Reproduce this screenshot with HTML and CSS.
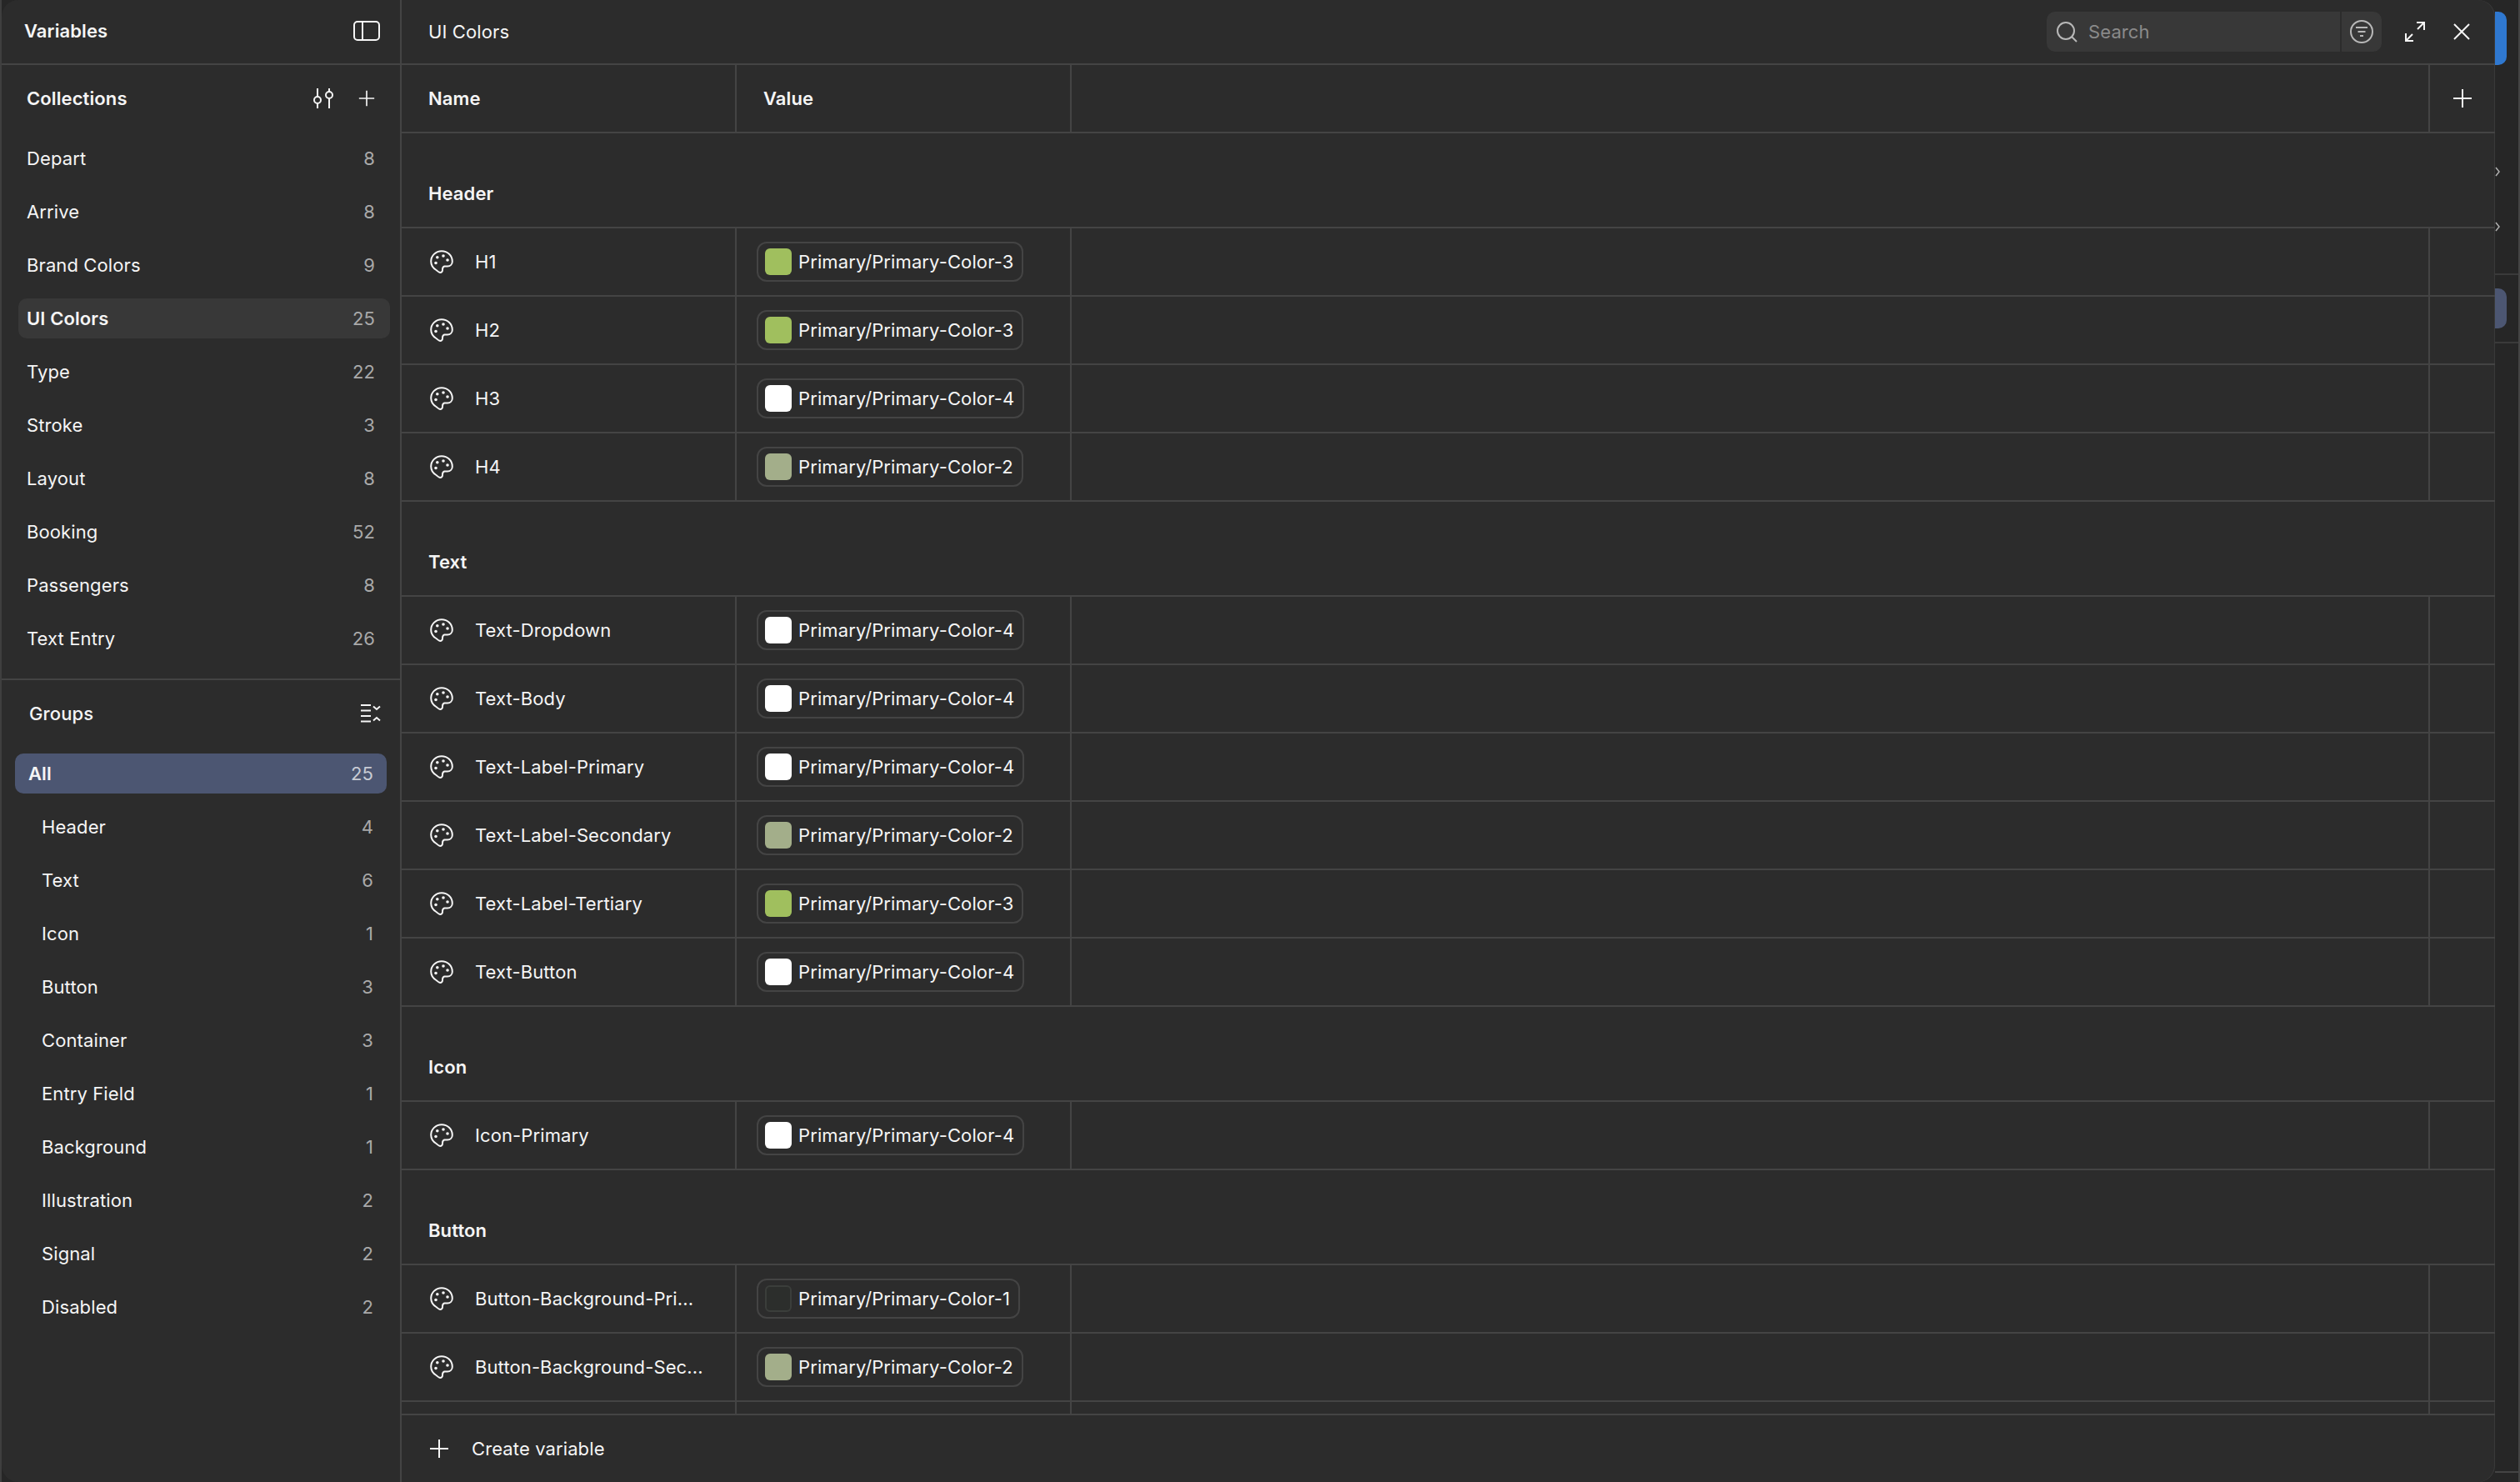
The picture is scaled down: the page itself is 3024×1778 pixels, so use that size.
FILE: index.html
```html
<!DOCTYPE html>
<html lang="en">
<head>
<meta charset="utf-8">
<title>Variables</title>
<link rel="stylesheet" href="styles.css">
</head>
<body>
<svg class="defs" width="0" height="0" aria-hidden="true">
  <symbol id="palette" viewBox="0 0 28 28">
    <path d="M14 1.200C6.800 1.200 1.200 6.800 1.200 13.600c0 4.800 2.600 8.300 6.300 10.400 1.300.8 2.400 2.400 4 2.800 2.200.5 3.600-1 3.500-3-.1-1.600.1-3.500 2.200-4.300h3.800c3.300 0 5.800-2.400 5.800-5.800C26.800 6.600 21 1.200 14 1.200z" fill="none" stroke="currentColor" stroke-width="2" stroke-linejoin="round"/>
    <circle cx="8.800" cy="8.800" r="1.800"/><circle cx="16" cy="7" r="1.800"/><circle cx="21" cy="12" r="1.800"/><circle cx="7" cy="15.500" r="1.800"/>
  </symbol>
  <symbol id="plus" viewBox="0 0 24 24">
    <path d="M12 1v22M1 12h22" fill="none" stroke="currentColor" stroke-width="2"/>
  </symbol>
</svg>
<div class="page">
  <div class="modal">
    <aside class="sidebar">
      <header class="side-title">
        <span class="strong">Variables</span>
        <svg class="ic-panel" width="32" height="24" viewBox="0 0 32 24"><rect x="1" y="1" width="30" height="22" rx="4" fill="none" stroke="currentColor" stroke-width="2"/><path d="M11 1v22" stroke="currentColor" stroke-width="2"/></svg>
      </header>
      <section class="collections">
        <div class="sec-head">
          <span class="strong">Collections</span>
          <span class="sec-icons">
            <svg width="26" height="24" viewBox="0 0 26 24"><g fill="none" stroke="currentColor" stroke-width="2"><path d="M6 0v10M6 18v6M20 0v4M20 12v12"/><circle cx="6" cy="14" r="4"/><circle cx="20" cy="8" r="4"/></g></svg>
            <svg class="ic-plus20" width="20" height="20"><use href="#plus"/></svg>
          </span>
        </div>
        <ul class="list">
          <li class="item"><span>Depart</span><span class="count">8</span></li>
          <li class="item"><span>Arrive</span><span class="count">8</span></li>
          <li class="item"><span>Brand Colors</span><span class="count">9</span></li>
          <li class="item item-current"><span class="strong">UI Colors</span><span class="count">25</span></li>
          <li class="item"><span>Type</span><span class="count">22</span></li>
          <li class="item"><span>Stroke</span><span class="count">3</span></li>
          <li class="item"><span>Layout</span><span class="count">8</span></li>
          <li class="item"><span>Booking</span><span class="count">52</span></li>
          <li class="item"><span>Passengers</span><span class="count">8</span></li>
          <li class="item"><span>Text Entry</span><span class="count">26</span></li>
        </ul>
      </section>
      <section class="groups">
        <div class="sec-head groups-head">
          <span class="medium">Groups</span>
          <svg width="24" height="22" viewBox="0 0 24 22"><path d="M0 1h12M0 7.500h12M0 14h12M0 20.500h12M15 2.500l4 3.500 4-3.500M15 19.500l4-3.500 4 3.500" fill="none" stroke="currentColor" stroke-width="2"/></svg>
        </div>
        <ul class="list list-groups">
          <li class="item item-all"><span class="strong">All</span><span class="count">25</span></li>
          <li class="item item-child"><span>Header</span><span class="count">4</span></li>
          <li class="item item-child"><span>Text</span><span class="count">6</span></li>
          <li class="item item-child"><span>Icon</span><span class="count">1</span></li>
          <li class="item item-child"><span>Button</span><span class="count">3</span></li>
          <li class="item item-child"><span>Container</span><span class="count">3</span></li>
          <li class="item item-child"><span>Entry Field</span><span class="count">1</span></li>
          <li class="item item-child"><span>Background</span><span class="count">1</span></li>
          <li class="item item-child"><span>Illustration</span><span class="count">2</span></li>
          <li class="item item-child"><span>Signal</span><span class="count">2</span></li>
          <li class="item item-child"><span>Disabled</span><span class="count">2</span></li>
        </ul>
      </section>
    </aside>
    <main class="main">
      <header class="topbar">
        <span class="top-name">UI Colors</span>
        <div class="top-tools">
          <div class="search">
            <div class="search-field">
              <svg width="25" height="25" viewBox="0 0 25 25"><circle cx="11" cy="11" r="10" fill="none" stroke="currentColor" stroke-width="2"/><path d="M18 18l6 6" stroke="currentColor" stroke-width="2"/></svg>
              <span>Search</span>
            </div>
            <div class="search-filter">
              <svg width="28" height="28" viewBox="0 0 28 28"><circle cx="14" cy="14" r="13" fill="none" stroke="currentColor" stroke-width="2"/><path d="M7 9h14M9.500 14h9M12 19h4" stroke="currentColor" stroke-width="2"/></svg>
            </div>
          </div>
          <svg class="ic-expand" width="24" height="24" viewBox="0 0 24 24"><path d="M14 1h9v9M23 1l-8 8M10 23H1v-9M1 23l8-8" fill="none" stroke="currentColor" stroke-width="2"/></svg>
          <svg class="ic-close" width="20" height="20" viewBox="0 0 20 20"><path d="M1 1l18 18M19 1L1 19" fill="none" stroke="currentColor" stroke-width="2"/></svg>
        </div>
      </header>
      <div class="table">
        <div class="row row-head">
          <div class="cell"><span class="strong">Name</span></div>
          <div class="cell cell-value-head"><span class="strong">Value</span></div>
          <div class="cell"></div>
          <div class="cell cell-add"><svg width="24" height="24"><use href="#plus"/></svg></div>
        </div>

        <div class="group-title strong">Header</div>
        <div class="row"><div class="cell cell-name"><svg class="palette" width="28" height="28"><use href="#palette"/></svg><span>H1</span></div><div class="cell"><span class="chip"><i class="swatch sw-3"></i>Primary/Primary-Color-3</span></div><div class="cell"></div><div class="cell"></div></div>
        <div class="row"><div class="cell cell-name"><svg class="palette" width="28" height="28"><use href="#palette"/></svg><span>H2</span></div><div class="cell"><span class="chip"><i class="swatch sw-3"></i>Primary/Primary-Color-3</span></div><div class="cell"></div><div class="cell"></div></div>
        <div class="row"><div class="cell cell-name"><svg class="palette" width="28" height="28"><use href="#palette"/></svg><span>H3</span></div><div class="cell"><span class="chip"><i class="swatch sw-4"></i>Primary/Primary-Color-4</span></div><div class="cell"></div><div class="cell"></div></div>
        <div class="row"><div class="cell cell-name"><svg class="palette" width="28" height="28"><use href="#palette"/></svg><span>H4</span></div><div class="cell"><span class="chip"><i class="swatch sw-2"></i>Primary/Primary-Color-2</span></div><div class="cell"></div><div class="cell"></div></div>

        <div class="group-title strong">Text</div>
        <div class="row"><div class="cell cell-name"><svg class="palette" width="28" height="28"><use href="#palette"/></svg><span>Text-Dropdown</span></div><div class="cell"><span class="chip"><i class="swatch sw-4"></i>Primary/Primary-Color-4</span></div><div class="cell"></div><div class="cell"></div></div>
        <div class="row"><div class="cell cell-name"><svg class="palette" width="28" height="28"><use href="#palette"/></svg><span>Text-Body</span></div><div class="cell"><span class="chip"><i class="swatch sw-4"></i>Primary/Primary-Color-4</span></div><div class="cell"></div><div class="cell"></div></div>
        <div class="row"><div class="cell cell-name"><svg class="palette" width="28" height="28"><use href="#palette"/></svg><span>Text-Label-Primary</span></div><div class="cell"><span class="chip"><i class="swatch sw-4"></i>Primary/Primary-Color-4</span></div><div class="cell"></div><div class="cell"></div></div>
        <div class="row"><div class="cell cell-name"><svg class="palette" width="28" height="28"><use href="#palette"/></svg><span>Text-Label-Secondary</span></div><div class="cell"><span class="chip"><i class="swatch sw-2"></i>Primary/Primary-Color-2</span></div><div class="cell"></div><div class="cell"></div></div>
        <div class="row"><div class="cell cell-name"><svg class="palette" width="28" height="28"><use href="#palette"/></svg><span>Text-Label-Tertiary</span></div><div class="cell"><span class="chip"><i class="swatch sw-3"></i>Primary/Primary-Color-3</span></div><div class="cell"></div><div class="cell"></div></div>
        <div class="row"><div class="cell cell-name"><svg class="palette" width="28" height="28"><use href="#palette"/></svg><span>Text-Button</span></div><div class="cell"><span class="chip"><i class="swatch sw-4"></i>Primary/Primary-Color-4</span></div><div class="cell"></div><div class="cell"></div></div>

        <div class="group-title strong">Icon</div>
        <div class="row"><div class="cell cell-name"><svg class="palette" width="28" height="28"><use href="#palette"/></svg><span>Icon-Primary</span></div><div class="cell"><span class="chip"><i class="swatch sw-4"></i>Primary/Primary-Color-4</span></div><div class="cell"></div><div class="cell"></div></div>

        <div class="group-title strong">Button</div>
        <div class="row"><div class="cell cell-name"><svg class="palette" width="28" height="28"><use href="#palette"/></svg><span>Button-Background-Pri...</span></div><div class="cell"><span class="chip"><i class="swatch sw-1"></i>Primary/Primary-Color-1</span></div><div class="cell"></div><div class="cell"></div></div>
        <div class="row"><div class="cell cell-name"><svg class="palette" width="28" height="28"><use href="#palette"/></svg><span>Button-Background-Sec...</span></div><div class="cell"><span class="chip"><i class="swatch sw-2"></i>Primary/Primary-Color-2</span></div><div class="cell"></div><div class="cell"></div></div>
        <div class="row"><div class="cell"></div><div class="cell"></div><div class="cell"></div><div class="cell"></div></div>
      </div>
      <footer class="footer">
        <svg width="24" height="24"><use href="#plus"/></svg>
        <span>Create variable</span>
      </footer>
    </main>
  </div>
  <div class="behind">
    <div class="behind-tab"></div>
    <div class="behind-chevrons">
      <svg width="6" height="12" viewBox="0 0 6 12"><path d="M1 1l4 5-4 5" fill="none" stroke="currentColor" stroke-width="1.500"/></svg>
      <svg width="6" height="12" viewBox="0 0 6 12"><path d="M1 1l4 5-4 5" fill="none" stroke="currentColor" stroke-width="1.500"/></svg>
    </div>
    <div class="behind-sep"></div>
    <div class="behind-pill"></div>
    <div class="behind-sep behind-sep-low"></div>
    <div class="behind-base"></div>
  </div>
</div>
</body>
</html>
```
FILE: styles.css
```css
* { box-sizing: border-box; }
html, body { margin: 0; padding: 0; }
body {
  width: 3024px;
  height: 1778px;
  overflow: hidden;
  background: #262626;
  color: #f5f5f5;
  font-family: Inter, "Liberation Sans", sans-serif;
  font-size: 22px;
  line-height: 32px;
  letter-spacing: 0.11px;
}
.defs { position: absolute; }
svg { display: block; flex: none; fill: currentColor; }
ul { list-style: none; margin: 0; padding: 0; }
.strong { font-weight: 600; }
.medium { font-weight: 500; }

.page { display: flex; width: 3024px; height: 1778px; border-left: 2px solid #3f3f3f; }
.modal {
  display: flex;
  width: 2992px;
  height: 1778px;
  background: #2c2c2c;
  border-radius: 20px;
  overflow: hidden;
  box-shadow: inset -1px 0 0 #3a3a3a;
}

/* sidebar */
.sidebar { display: flex; flex-direction: column; width: 480px; flex: none; border-right: 2px solid #444; }
.side-title { display: flex; align-items: center; justify-content: space-between; height: 78px; padding: 0 24px 2px 27px; border-bottom: 2px solid #444; }
.ic-panel { color: #f5f5f5; }
.collections { height: 738px; border-bottom: 2px solid #444; }
.sec-head { display: flex; align-items: center; justify-content: space-between; height: 80px; padding: 0 30px 0 30px; }
.sec-icons { display: flex; align-items: center; gap: 29px; }
.list { padding: 0 10px 0 20px; }
.item { display: flex; align-items: center; justify-content: space-between; height: 64px; padding: 0 20px 0 10px; }
.count { color: #a9a9a9; }
.item-current { position: relative; }
.item-current::before { content: ""; position: absolute; left: 0; right: 2px; top: 8px; bottom: 8px; background: #383838; border-radius: 10px; }
.item-current > span { position: relative; }

.groups-head { padding: 0 23px 0 33px; height: 80px; }
.list-groups { padding: 0 14px 0 16px; }
.list-groups .item { padding: 0 18px 0 16px; }
.item-all { position: relative; }
.item-all::before { content: ""; position: absolute; left: 0; right: 2px; top: 8px; bottom: 8px; background: #4c5672; border-radius: 10px; }
.item-all > span { position: relative; }
.item-all .count { color: #c8cbd4; }
.list-groups .item-child { padding-left: 32px; }

/* main */
.main { display: flex; flex-direction: column; flex: 1; min-width: 0; }
.topbar { display: flex; align-items: center; justify-content: space-between; height: 78px; padding: 0 30px 1px 32px; border-bottom: 2px solid #444; flex: none; }
.top-tools { display: flex; align-items: center; }
.search { display: flex; width: 402px; height: 48px; margin-right: 28px; }
.search-field { display: flex; align-items: center; gap: 13px; flex: 1; padding-left: 12px; background: #383838; border-radius: 10px 0 0 10px; color: #b8b8b8; }
.search-field svg { margin-top: 1px; }
.search-field span { color: #8a8a8a; }
.search-filter { display: flex; align-items: center; justify-content: center; width: 48px; margin-left: 2px; background: #383838; border-radius: 0 10px 10px 0; color: #b8b8b8; }
.ic-close { margin-left: 34px; }

.table { flex: 1; min-height: 0; overflow: hidden; }
.row { display: grid; grid-template-columns: 402px 402px 1630px 1fr; height: 82px; border-bottom: 2px solid #444; }
.cell { display: flex; align-items: center; min-width: 0; padding: 0 10px; border-right: 2px solid #444; }
.cell:last-child { border-right: 0; }
.row .cell:first-child { padding-left: 32px; }
.cell-add { justify-content: center; padding: 0 0 0 0; }
.cell-name { gap: 26px; }
.cell-name .palette { margin-left: 2px; }
.row .cell:nth-child(2) { padding-left: 24px; }
.row-head .cell:nth-child(2) { padding-left: 32px; }

.group-title { display: flex; align-items: flex-end; height: 114px; padding: 0 0 24px 32px; border-bottom: 2px solid #444; }
.chip { display: inline-flex; align-items: center; gap: 8px; height: 48px; padding: 0 10px 0 8px; border: 2px solid #444; border-radius: 12px; white-space: nowrap; }
.swatch { display: block; width: 32px; height: 32px; border-radius: 6px; }
.sw-1 { background: #2c2e2c; border: 2px solid #3b3e3b; }
.sw-2 { background: #a3ae8a; }
.sw-3 { background: #a0bf5e; }
.sw-4 { background: #ffffff; }

.footer { display: flex; align-items: center; gap: 27px; height: 82px; padding: 0 0 0 33px; border-top: 2px solid #444; flex: none; }

/* strip of the app behind the modal */
.behind { display: flex; flex-direction: column; flex: 1; position: relative; color: #b0b0b0; border-right: 2px solid #444; }
.behind-tab { width: 14px; height: 64px; margin-top: 14px; background: #2f78d0; border-radius: 0 10px 10px 0; }
.behind-chevrons { display: flex; flex-direction: column; gap: 54px; margin: 122px 0 0 0; }
.behind-sep { height: 2px; margin-top: 50px; background: #3a3a3a; }
.behind-pill { width: 14px; height: 48px; margin-top: 16px; background: #4c5672; border-radius: 0 10px 10px 0; }
.behind-sep-low { margin-top: 16px; }
.behind-base { height: 2px; margin-top: 1353px; background: #444; }
```
